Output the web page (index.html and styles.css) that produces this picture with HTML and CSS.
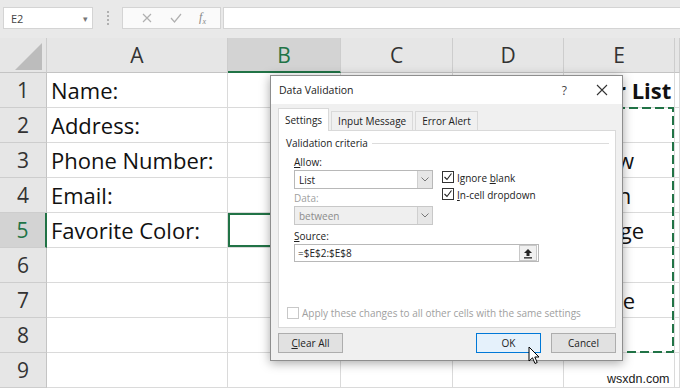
FILE: index.html
```html
<!DOCTYPE html>
<html lang="en">
<head>
    <meta charset="UTF-8">
    <title>Data Validation</title>
    <link rel="stylesheet" href="styles.css">
</head>
<body>
    <!-- formula bar -->
    <div class="topbar">
        <div class="namebox"><span>E2</span><span class="nb-arrow">&#9662;</span></div>
        <div class="grip"></div>
        <div class="fx-tools">
            <svg width="12" height="12" viewBox="0 0 12 12"><path d="M2 2 L10 10 M10 2 L2 10" stroke="#b0b0b0" stroke-width="1.2" fill="none"/></svg>
            <svg width="14" height="12" viewBox="0 0 14 12"><path d="M2 6 L5.5 10 L12 2" stroke="#b0b0b0" stroke-width="1.2" fill="none"/></svg>
            <span class="fx">f<sub>x</sub></span>
        </div>
        <div class="formula"></div>
    </div>

    <!-- sheet grid -->
    <div class="sheet">
        <div class="ch corner"><svg width="30" height="30" viewBox="0 0 30 30"><polygon points="29,2 29,29 2,29" fill="#bcbcbc"/></svg></div>
        <div class="ch">A</div>
        <div class="ch sel">B</div>
        <div class="ch">C</div>
        <div class="ch">D</div>
        <div class="ch">E</div>
        <div class="ch"></div>

        <div class="rh">1</div><div class="c">Name:</div><div class="c"></div><div class="c"></div><div class="c"></div><div class="c bold">Color List</div><div class="c"></div>
        <div class="rh">2</div><div class="c">Address:</div><div class="c"></div><div class="c"></div><div class="c"></div><div class="c">Red</div><div class="c"></div>
        <div class="rh">3</div><div class="c">Phone Number:</div><div class="c"></div><div class="c"></div><div class="c"></div><div class="c">Yellow</div><div class="c"></div>
        <div class="rh">4</div><div class="c">Email:</div><div class="c"></div><div class="c"></div><div class="c"></div><div class="c">Green</div><div class="c"></div>
        <div class="rh sel">5</div><div class="c">Favorite Color:</div><div class="c active"></div><div class="c"></div><div class="c"></div><div class="c">Orange</div><div class="c"></div>
        <div class="rh">6</div><div class="c"></div><div class="c"></div><div class="c"></div><div class="c"></div><div class="c">Blue</div><div class="c"></div>
        <div class="rh">7</div><div class="c"></div><div class="c"></div><div class="c"></div><div class="c"></div><div class="c">Purple</div><div class="c"></div>
        <div class="rh">8</div><div class="c"></div><div class="c"></div><div class="c"></div><div class="c"></div><div class="c">Pink</div><div class="c"></div>
        <div class="rh">9</div><div class="c"></div><div class="c"></div><div class="c"></div><div class="c"></div><div class="c"></div><div class="c"></div>
    </div>

    <!-- copy marquee around E2:E8 -->
    <svg class="ants" width="118" height="252" viewBox="0 0 118 252">
        <rect x="4" y="4" width="109" height="244" fill="none" stroke="#217346" stroke-width="2" stroke-dasharray="9 4"/>
    </svg>

    <!-- dialog -->
    <div class="dialog">
        <div class="dlg-title">
            <span class="dlg-name">Data Validation</span>
            <span class="help">?</span>
            <svg class="close" width="12" height="12" viewBox="0 0 12 12"><path d="M1 1 L11 11 M11 1 L1 11" stroke="#333" stroke-width="1.1" fill="none"/></svg>
        </div>
        <div class="dlg-body">
            <div class="tabs">
                <div class="tab active">Settings</div>
                <div class="tab">Input Message</div>
                <div class="tab">Error Alert</div>
            </div>
            <div class="panel">
                <div class="group-title"><span>Validation criteria</span></div>
                <div class="criteria">
                    <div class="crit-left">
                        <div class="lbl"><u>A</u>llow:</div>
                        <div class="combo"><span>List</span><span class="combo-btn"><svg width="8" height="5" viewBox="0 0 8 5"><path d="M0.5 0.5 L4 4 L7.5 0.5" stroke="#777" fill="none"/></svg></span></div>
                        <div class="lbl off">Data:</div>
                        <div class="combo off"><span>between</span><span class="combo-btn"><svg width="8" height="5" viewBox="0 0 8 5"><path d="M0.5 0.5 L4 4 L7.5 0.5" stroke="#777" fill="none"/></svg></span></div>
                    </div>
                    <div class="crit-right">
                        <div class="check"><span class="box"><svg width="10" height="10" viewBox="0 0 10 10"><path d="M1.5 5 L4 7.5 L8.5 1.5" stroke="#222" stroke-width="1.1" fill="none"/></svg></span><span>Ignore <u>b</u>lank</span></div>
                        <div class="check"><span class="box"><svg width="10" height="10" viewBox="0 0 10 10"><path d="M1.5 5 L4 7.5 L8.5 1.5" stroke="#222" stroke-width="1.1" fill="none"/></svg></span><span><u>I</u>n-cell dropdown</span></div>
                    </div>
                </div>
                <div class="lbl source-lbl"><u>S</u>ource:</div>
                <div class="source">
                    <span>=$E$2:$E$8</span>
                    <span class="src-btn"><svg width="10" height="11" viewBox="0 0 10 11"><polygon points="5,1 9,5 6.5,5 6.5,8 3.5,8 3.5,5 1,5" fill="#222"/><rect x="1" y="9.2" width="8" height="1.3" fill="#222"/></svg></span>
                </div>
                <div class="apply"><span class="box off"></span><span>Apply these changes to all other cells with the same settings</span></div>
            </div>
            <div class="buttons">
                <button class="btn"><u>C</u>lear All</button>
                <span class="spacer"></span>
                <button class="btn default">OK</button>
                <button class="btn">Cancel</button>
            </div>
        </div>
    </div>

    <svg class="cursor" width="14" height="20" viewBox="0 0 14 20">
        <path d="M1 1 L1 15 L4.5 11.8 L7 17.5 L9.2 16.5 L6.8 11 L11 11 Z" fill="#fff" stroke="#000" stroke-width="1" stroke-linejoin="round"/>
    </svg>

    <div class="watermark">wsxdn.com</div>
</body>
</html>
```

FILE: styles.css
```css
* {
    box-sizing: border-box;
}
body {
    margin: 0;
    width: 680px;
    height: 390px;
    overflow: hidden;
    position: relative;
    background: #fff;
    font-family: "Open Sans", "Noto Sans", sans-serif;
    color: #222;
}

/* formula bar */
.topbar {
    height: 38px;
    background: #e9e9e9;
    display: flex;
    align-items: flex-start;
    padding-top: 7px;
    padding-left: 3px;
}
.namebox {
    width: 90px;
    height: 22px;
    background: #fff;
    border: 1px solid #d4d4d4;
    display: flex;
    align-items: center;
    justify-content: space-between;
    padding: 0 4px 0 7px;
    font-size: 11px;
    color: #444;
}
.nb-arrow {
    font-size: 9px;
    color: #777;
}
.grip {
    width: 2px;
    height: 14px;
    margin: 4px 13px 0 14px;
    border-left: 2px dotted #b0b0b0;
}
.fx-tools {
    width: 99px;
    height: 22px;
    background: #fafafa;
    border: 1px solid #d4d4d4;
    display: flex;
    align-items: center;
    justify-content: space-around;
    padding: 0 6px 0 10px;
}
.fx {
    font-family: "Liberation Serif", serif;
    font-style: italic;
    font-size: 12px;
    color: #888;
}
.fx sub {
    font-size: 8px;
}
.formula {
    flex: 1;
    height: 22px;
    margin-left: 2px;
    background: #fff;
    border: 1px solid #d4d4d4;
    border-right: none;
}

/* grid */
.sheet {
    display: grid;
    grid-template-columns: 47px 181px 113px 112px 111px 111px 1fr;
    grid-auto-rows: 35px;
}
.ch {
    background: #e6e6e6;
    border-right: 1px solid #cdcdcd;
    border-bottom: 1px solid #c4c4c4;
    display: flex;
    align-items: center;
    justify-content: center;
    font-size: 21px;
    color: #333;
}
.ch.sel {
    background: #d3d3d3;
    color: #217346;
    border-bottom: 2px solid #217346;
}
.corner {
    align-items: flex-end;
    justify-content: flex-end;
    padding: 0 3px 1px 0;
}
.corner svg {
    display: block;
}
.rh {
    background: #e6e6e6;
    border-right: 1px solid #c4c4c4;
    border-bottom: 1px solid #cdcdcd;
    display: flex;
    align-items: center;
    justify-content: center;
    font-size: 21px;
    color: #333;
}
.rh.sel {
    background: #d3d3d3;
    color: #217346;
    border-right: 2px solid #217346;
}
.c {
    border-right: 1px solid #dadada;
    border-bottom: 1px solid #dadada;
    display: flex;
    align-items: center;
    padding-left: 4px;
    font-size: 22px;
    color: #111;
    white-space: nowrap;
}
.c.bold {
    font-weight: bold;
}
.c.active {
    box-shadow: inset 0 0 0 2px #217346;
}

.ants {
    position: absolute;
    left: 560px;
    top: 104px;
}

/* dialog */
.dialog {
    position: absolute;
    left: 270px;
    top: 75px;
    width: 353px;
    height: 286px;
    background: #f0f0f0;
    border: 1px solid #8e8e8e;
    box-shadow: 0 2px 10px rgba(0, 0, 0, 0.35);
    font-size: 10px;
    color: #222;
}
.dlg-title {
    height: 28px;
    background: #fff;
    display: flex;
    align-items: center;
    padding: 0 14px 0 8px;
    font-size: 10.5px;
}
.dlg-name {
    flex: 1;
}
.help {
    font-size: 12px;
    color: #444;
    margin-right: 29px;
}
.dlg-body {
    padding: 4px 6px 0 7px;
}
.tabs {
    display: flex;
    align-items: flex-end;
    height: 22px;
    position: relative;
    z-index: 1;
}
.tab {
    height: 19px;
    padding: 0 6px;
    border: 1px solid #d9d9d9;
    border-bottom: none;
    margin-left: 2px;
    display: flex;
    align-items: center;
    background: #f0f0f0;
}
.tab.active {
    height: 23px;
    margin-left: 0;
    margin-bottom: -1px;
    background: #fff;
    padding: 0 6px;
}
.panel {
    height: 198px;
    background: #fff;
    border: 1px solid #d9d9d9;
    padding: 5px 6px 0 7px;
}
.group-title {
    height: 14px;
    display: flex;
    align-items: center;
}
.group-title::after {
    content: "";
    flex: 1;
    height: 1px;
    background: #dcdcdc;
    margin-left: 4px;
}
.criteria {
    display: flex;
    margin-top: 5px;
    padding-left: 8px;
}
.crit-left {
    width: 139px;
}
.lbl {
    height: 14px;
    line-height: 14px;
    margin-bottom: 1px;
}
.lbl.off {
    color: #a0a0a0;
    margin-top: 2px;
}
.combo {
    height: 19px;
    border: 1px solid #b8b8b8;
    background: #fff;
    display: flex;
    align-items: center;
    padding-left: 4px;
}
.combo span:first-child {
    flex: 1;
}
.combo.off {
    background: #efefef;
    color: #8c8c8c;
    border-color: #c8c8c8;
}
.combo-btn {
    width: 15px;
    height: 17px;
    background: #e6e6e6;
    border-left: 1px solid #cfcfcf;
    display: flex;
    align-items: center;
    justify-content: center;
}
.crit-right {
    margin-left: 9px;
    padding-top: 16px;
}
.check {
    height: 17px;
    display: flex;
    align-items: flex-start;
}
.box {
    width: 12px;
    height: 12px;
    border: 1px solid #333;
    background: #fff;
    margin-right: 3px;
    display: flex;
    align-items: center;
    justify-content: center;
}
.box.off {
    border-color: #c8c8c8;
}
.source-lbl {
    margin-top: 4px;
    padding-left: 8px;
}
.source {
    margin-left: 8px;
    width: 245px;
    height: 18px;
    border: 1px solid #b8b8b8;
    background: #fff;
    display: flex;
    align-items: center;
    padding-left: 3px;
}
.source span:first-child {
    flex: 1;
}
.src-btn {
    width: 18px;
    height: 16px;
    margin-right: 1px;
    background: #f0f0f0;
    border: 1px solid #c8c8c8;
    display: flex;
    align-items: center;
    justify-content: center;
}
.apply {
    margin-top: 44px;
    display: flex;
    align-items: center;
    color: #a0a0a0;
    margin-left: 1px;
}
.buttons {
    display: flex;
    margin-top: 5px;
    gap: 10px;
}
.spacer {
    flex: 1;
}
.btn {
    width: 65px;
    height: 20px;
    padding: 0;
    font-family: inherit;
    font-size: 10px;
    color: #222;
    background: #e1e1e1;
    border: 1px solid #adadad;
}
.btn.default {
    background: #e5f1fb;
    border-color: #0078d7;
}

.cursor {
    position: absolute;
    left: 528px;
    top: 346px;
}
.watermark {
    position: absolute;
    left: 607px;
    top: 372px;
    font-family: "Liberation Sans", Arial, sans-serif;
    font-size: 12.5px;
    color: #1a1a1a;
}
```
